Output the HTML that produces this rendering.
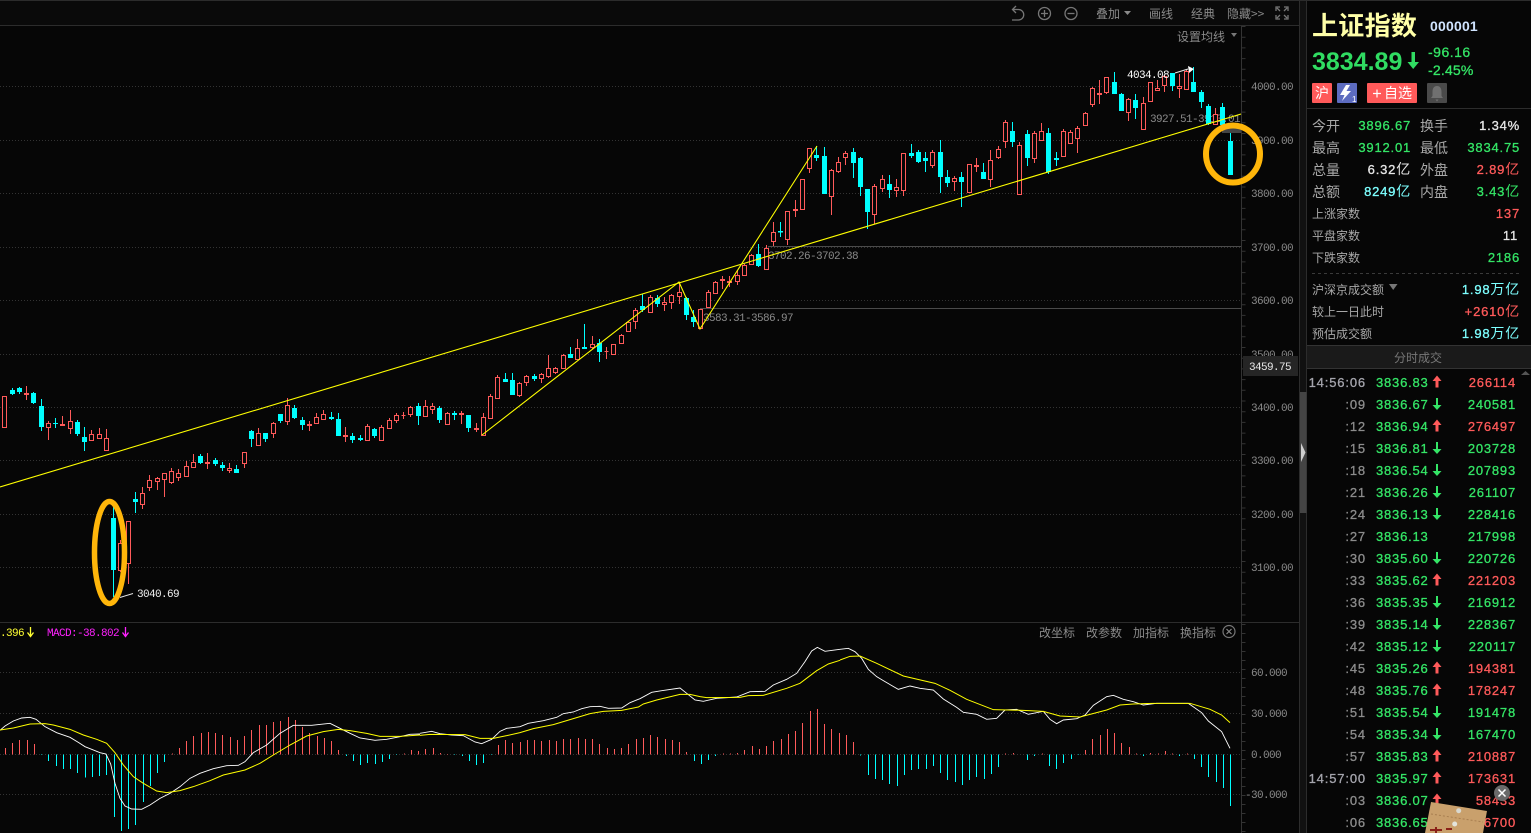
<!DOCTYPE html>
<html lang="zh"><head><meta charset="utf-8"><title>上证指数</title>
<style>
html,body{margin:0;padding:0;background:#060606;width:1531px;height:833px;overflow:hidden}
svg{display:block;position:absolute;left:0;top:0}
text{white-space:pre}
.m{font:11px "Liberation Mono",monospace;letter-spacing:-.6px;fill:#8a8a8a}
.c{font:12px "WenQuanYi Zen Hei","Noto Sans CJK SC",sans-serif;fill:#8a8a8a}
.l{font:14px "WenQuanYi Zen Hei","Noto Sans CJK SC",sans-serif;fill:#a8a8a8}
.s{font:12px "WenQuanYi Zen Hei","Noto Sans CJK SC",sans-serif;fill:#a8a8a8}
.n{font:13px "Liberation Sans",sans-serif;letter-spacing:.85px;stroke:#8c8c8c;stroke-width:.3px}
.v{font:13px "Liberation Sans","WenQuanYi Zen Hei",sans-serif;letter-spacing:.8px;stroke-width:.3px}
.g{fill:#34e566;stroke:#34e566}.r{fill:#ff5a5a;stroke:#ff5a5a}.w{fill:#e6e6e6;stroke:#e6e6e6}.y{fill:#7dffff;stroke:#7dffff}.t{fill:#8c8c8c}
.z{stroke-width:0;font-size:14px}
</style></head><body>
<svg width="1531" height="833" viewBox="0 0 1531 833" xmlns="http://www.w3.org/2000/svg">
<defs>
<path id="u" d="M0-6.5 4.5-1H1.5V5.500H-1.500V-1H-4.500Z" fill="#ff5a5a"/>
<path id="d" d="M-1-6H1V1H4.500L0 6-4.500 1H-1Z" fill="#34e566"/>
</defs>
<rect width="1531" height="833" fill="#060606"/>
<!-- toolbar -->
<rect x="0" y="0" width="1300" height="25" fill="#0a0a0a"/>
<path d="M0 .5H1531M0 25.500H1299M0 622.500H1299" stroke="#2c2c2c" fill="none"/>
<!-- grid -->
<path d="M0 86.500H1241M0 140.500H1241M0 193.500H1241M0 247.500H1241M0 300.500H1241M0 354.500H1241M0 407.500H1241M0 460.500H1241M0 514.500H1241M0 567.500H1241M0 672.500H1241M0 713.500H1241M0 754.500H1241M0 794.500H1241" stroke="#333" stroke-dasharray="1 2" fill="none"/>
<path d="M768 246.500H1241M700 308.500H1241" stroke="#4a4a4a" fill="none"/>
<path d="M1241.500 26V833" stroke="#333" fill="none"/>
<path d="M1243.500 26V620" stroke="#333" stroke-width="4" stroke-dasharray="1 9.700" fill="none"/>
<path d="M1243.500 624V833" stroke="#333" stroke-width="4" stroke-dasharray="1 8" fill="none"/>
<!-- axis labels -->
<g class="m">
<text x="1251" y="90">4000.00</text><text x="1251" y="144">3900.00</text><text x="1251" y="197">3800.00</text><text x="1251" y="251">3700.00</text><text x="1251" y="304">3600.00</text><text x="1251" y="358">3500.00</text><text x="1251" y="411">3400.00</text><text x="1251" y="464">3300.00</text><text x="1251" y="518">3200.00</text><text x="1251" y="571">3100.00</text>
<text x="1251" y="676">60.000</text><text x="1251" y="717">30.000</text><text x="1251" y="758">0.000</text><text x="1245" y="798">-30.000</text>
<text x="768" y="259">3702.26-3702.38</text><text x="703" y="321">3583.31-3586.97</text><text x="1150" y="122">3927.51-3913.01</text>
</g>
<rect x="1243" y="356" width="55" height="20" fill="#252525"/>
<text class="m" x="1249" y="370" style="fill:#e8e8e8">3459.75</text>
<!-- candles -->
<g shape-rendering="crispEdges" stroke-width="1">
<path fill="none" stroke="#ff5a5a" d="M4.500 396V428M26.500 386V400M48.500 421V440M62.500 416V426M70.500 410V434M91.500 430V441M99.500 428V438M106.500 429V451M120.500 540V572M128.500 521V584M142.500 487V509M149.500 475V491M157.500 477V490M164.500 473V497M171.500 468V484M178.500 469V481M186.500 461V477M193.500 454V468M207.500 453V469M229.500 463V473M244.500 452V468M258.500 428V446M273.500 422V438M287.500 398V425M309.500 421V431M316.500 413V424M323.500 410V419M345.500 427V442M367.500 424V441M381.500 425V440M389.500 418V428M396.500 413V423M403.500 412V419M410.500 406V417M425.500 400V416M432.500 403V414M447.500 412V425M461.500 411V424M476.500 423V432M483.500 413V436M490.500 394V419M497.500 375V399M519.500 382V397M526.500 375V386M541.500 373V383M548.500 355V378M555.500 367V374M563.500 354V369M577.500 339V359M592.500 336V349M606.500 347V359M613.500 344V355M621.500 334V344M628.500 321V332M635.500 308V329M650.500 295V313M664.500 297V311M671.500 294V309M679.500 282V304M700.500 309V329M708.500 290V308M715.500 281V294M722.500 276V289M729.500 276V287M737.500 270V285M744.500 264V275M751.500 254V265M766.500 245V269M773.500 222V246M787.500 211V245M795.500 200V217M802.500 179V209M809.500 148V173M831.500 169V215M838.500 157V173M845.500 151V165M874.500 184V224M882.500 175V192M896.500 179V197M903.500 153V196M932.500 150V168M954.500 176V191M969.500 164V192M976.500 158V172M990.500 150V187M998.500 146V159M1005.500 120V148M1019.500 142V194M1034.500 131V163M1041.500 123V141M1063.500 129V157M1070.500 130V144M1077.500 126V153M1085.500 112V126M1092.500 87V107M1099.500 80V104M1106.500 77V94M1128.500 98V121M1143.500 97V129M1150.500 82V101M1157.500 80V91M1164.500 75V92M1179.500 74V98M1186.500 70V90M1215.500 108V125"/>
<path fill="#060606" stroke="#ff5a5a" d="M2.500 396.500h4V427.500h-4zM24.500 393.500h4v1h-4zM46.500 423.500h4v4h-4zM60.500 424.500h4v1h-4zM68.500 421.500h4v7h-4zM89.500 434.500h4v6h-4zM97.500 434.500h4v4h-4zM104.500 438.500h4v12h-4zM118.500 543.500h4v27h-4zM126.500 521.500h4v42h-4zM140.500 493.500h4v11h-4zM147.500 480.500h4v7h-4zM155.500 478.500h4v3h-4zM162.500 473.500h4v6h-4zM169.500 471.500h4v11h-4zM176.500 473.500h4v4h-4zM184.500 466.500h4v10h-4zM191.500 462.500h4v5h-4zM205.500 462.500h4v1h-4zM227.500 468.500h4v2h-4zM242.500 452.500h4v11h-4zM256.500 433.500h4v12h-4zM271.500 423.500h4v10h-4zM285.500 405.500h4v16h-4zM307.500 424.500h4v1h-4zM314.500 417.500h4v6h-4zM321.500 414.500h4v5h-4zM343.500 435.500h4v1h-4zM365.500 426.500h4v14h-4zM379.500 427.500h4v13h-4zM387.500 420.500h4v8h-4zM394.500 415.500h4v5h-4zM401.500 415.500h4v0h-4zM408.500 407.500h4v7h-4zM423.500 406.500h4v10h-4zM430.500 406.500h4v3h-4zM445.500 413.500h4v11h-4zM459.500 413.500h4v1h-4zM474.500 428.500h4v1h-4zM481.500 417.500h4v18h-4zM488.500 396.500h4v22h-4zM495.500 377.500h4v21h-4zM517.500 383.500h4v12h-4zM524.500 376.500h4v6h-4zM539.500 374.500h4v4h-4zM546.500 368.500h4v8h-4zM553.500 368.500h4v4h-4zM561.500 355.500h4v13h-4zM575.500 348.500h4v11h-4zM590.500 344.500h4v3h-4zM604.500 351.500h4v0h-4zM611.500 344.500h4v10h-4zM619.500 335.500h4v8h-4zM626.500 322.500h4v9h-4zM633.500 310.500h4v11h-4zM648.500 297.500h4v15h-4zM662.500 302.500h4v2h-4zM669.500 295.500h4v7h-4zM677.500 292.500h4v4h-4zM698.500 309.500h4v19h-4zM706.500 292.500h4v15h-4zM713.500 282.500h4v11h-4zM720.500 279.500h4v1h-4zM727.500 281.500h4v1h-4zM735.500 275.500h4v6h-4zM742.500 265.500h4v10h-4zM749.500 255.500h4v9h-4zM764.500 248.500h4v21h-4zM771.500 232.500h4v9h-4zM785.500 211.500h4v28h-4zM793.500 209.500h4v1h-4zM800.500 179.500h4v30h-4zM807.500 148.500h4v20h-4zM829.500 170.500h4v26h-4zM836.500 162.500h4v9h-4zM843.500 153.500h4v4h-4zM872.500 186.500h4v28h-4zM880.500 179.500h4v9h-4zM894.500 187.500h4v3h-4zM901.500 153.500h4v37h-4zM930.500 152.500h4v13h-4zM952.500 178.500h4v3h-4zM967.500 164.500h4v28h-4zM974.500 165.500h4v1h-4zM988.500 160.500h4v19h-4zM996.500 149.500h4v8h-4zM1003.500 122.500h4v19h-4zM1017.500 145.500h4v49h-4zM1032.500 133.500h4v25h-4zM1039.500 131.500h4v9h-4zM1061.500 131.500h4v25h-4zM1068.500 132.500h4v11h-4zM1075.500 128.500h4v10h-4zM1083.500 113.500h4v12h-4zM1090.500 88.500h4v16h-4zM1097.500 93.500h4v1h-4zM1104.500 77.500h4v15h-4zM1126.500 99.500h4v13h-4zM1141.500 103.500h4v26h-4zM1148.500 82.500h4v19h-4zM1155.500 88.500h4v2h-4zM1162.500 76.500h4v9h-4zM1177.500 86.500h4v2h-4zM1184.500 71.500h4v18h-4zM1213.500 114.500h4v10h-4z"/>
<path fill="none" stroke="#00ffff" d="M12.500 388V395M19.500 387V394M33.500 392V404M41.500 399V431M55.500 418V428M77.500 420V436M84.500 427V451M113.500 507V597M135.500 492V513M200.500 454V464M215.500 458V466M222.500 462V471M236.500 465V473M251.500 430V447M265.500 433V442M280.500 414V423M294.500 405V419M302.500 417V430M331.500 412V420M338.500 413V436M352.500 433V443M360.500 435V441M374.500 428V438M418.500 403V425M439.500 406V423M454.500 411V420M468.500 415V432M505.500 373V382M512.500 373V395M534.500 374V381M570.500 347V358M584.500 324V349M599.500 339V362M642.500 294V312M657.500 295V307M686.500 297V320M693.500 310V327M758.500 244V267M780.500 222V237M816.500 146V161M824.500 147V194M853.500 148V178M860.500 157V196M867.500 189V229M889.500 175V198M911.500 144V158M918.500 150V163M925.500 152V172M940.500 140V193M947.500 170V187M961.500 172V207M983.500 163V179M1012.500 122V147M1027.500 130V166M1048.500 128V174M1056.500 152V166M1114.500 72V94M1121.500 93V111M1135.500 94V119M1172.500 73V91M1193.500 67V92M1201.500 90V108M1208.500 104V125M1222.500 103V127M1230.500 133V175"/>
<path fill="#00ffff" d="M10 390h5v4h-5zM17 388h5v4h-5zM31 393h5v10h-5zM39 406h5v21h-5zM53 423h5v1h-5zM75 422h5v12h-5zM82 437h5v5h-5zM111 518h5v52h-5zM133 499h5v3h-5zM198 456h5v7h-5zM213 460h5v4h-5zM220 465h5v3h-5zM234 469h5v4h-5zM249 431h5v8h-5zM263 433h5v6h-5zM278 414h5v7h-5zM292 408h5v10h-5zM300 420h5v5h-5zM329 417h5v2h-5zM336 419h5v17h-5zM350 436h5v4h-5zM358 438h5v2h-5zM372 429h5v7h-5zM416 406h5v10h-5zM437 408h5v12h-5zM452 413h5v2h-5zM466 415h5v13h-5zM503 379h5v3h-5zM510 380h5v15h-5zM532 376h5v3h-5zM568 354h5v4h-5zM582 347h5v2h-5zM597 343h5v9h-5zM640 306h5v4h-5zM655 298h5v6h-5zM684 298h5v17h-5zM691 317h5v5h-5zM756 254h5v12h-5zM778 231h5v1.500h-5zM814 155h5v3h-5zM822 156h5v38h-5zM851 152h5v11h-5zM858 158h5v29h-5zM865 189h5v23h-5zM887 184h5v6h-5zM909 153h5v3h-5zM916 152h5v10h-5zM923 158h5v3h-5zM938 152h5v25h-5zM945 177h5v6h-5zM959 177h5v5h-5zM981 172h5v7h-5zM1010 131h5v11h-5zM1025 134h5v24h-5zM1046 133h5v39h-5zM1054 158h5v2h-5zM1112 82h5v12h-5zM1119 94h5v17h-5zM1133 100h5v8h-5zM1170 73h5v13h-5zM1191 82h5v10h-5zM1199 92h5v10h-5zM1206 106h5v18h-5zM1220 107h5v18h-5zM1228 141h5v34h-5z"/>
</g>
<rect x="1222" y="128" width="19" height="5" fill="#444"/>
<!-- drawing lines -->
<g fill="none" stroke="#ffff00" stroke-width="1.100">
<path d="M0 487 1241 114"/>
<path d="M482 435 679 282 700 329 817 146"/>
</g>
<!-- annotations -->
<path d="M120 597.500 133 593.500M1175 73 1188 69" stroke="#e8e8e8" fill="none"/>
<path d="M1188 66 1194 69 1189 73Z" fill="#fff"/>
<text class="m" x="137" y="597" style="fill:#f0f0f0">3040.69</text>
<text class="m" x="1127" y="78" style="fill:#fff">4034.08</text>
<!-- orange circles -->
<ellipse cx="109.500" cy="552.500" rx="15" ry="51" fill="none" stroke="#ffb60a" stroke-width="5.500"/>
<ellipse cx="1233" cy="154" rx="27" ry="28.500" fill="none" stroke="#ffb60a" stroke-width="6"/>
<!-- toolbar content -->
<g fill="none" stroke="#777" stroke-width="1.300">
<path d="M1013 9.500H1018.500A5.200 5.200 0 0 1 1018.500 20H1012M1016 6 1012.500 9.500 1016 13"/>
<circle cx="1044.500" cy="13.500" r="6"/><path d="M1041 13.500H1048M1044.500 10V17"/>
<circle cx="1071" cy="13.500" r="6"/><path d="M1067.500 13.500H1074.500"/>
<path d="M1276 11V7H1280M1284 7H1288V11M1276 15V19H1280M1284 19H1288V15M1277 8 1280 11M1287 8 1284 11M1277 18 1280 15M1287 18 1284 15"/>
</g>
<g class="c">
<text x="1096" y="18">叠加</text><text x="1149" y="18">画线</text><text x="1191" y="18">经典</text><text x="1227" y="18">隐藏&gt;&gt;</text>
<text x="1177" y="41">设置均线</text>
<text x="1039" y="637">改坐标</text><text x="1086" y="637">改参数</text><text x="1133" y="637">加指标</text><text x="1180" y="637">换指标</text>
</g>
<path d="M1124 11H1131L1127.500 15Z" fill="#8a8a8a"/>
<path d="M1231 33H1237L1234 37Z" fill="#777"/>
<circle cx="1229" cy="631.500" r="6" fill="none" stroke="#777" stroke-width="1.200"/>
<path d="M1226.500 629 1231.500 634M1231.500 629 1226.500 634" stroke="#888" stroke-width="1.200"/>
<!-- MACD header -->
<text x="0" y="636" style="font:11px 'Liberation Mono',monospace;letter-spacing:-.6px;fill:#ffff33">.396</text>
<path d="M30.500 627V636M27.500 632.500 30.500 636.500 33.500 632.500" stroke="#ffff33" stroke-width="1.300" fill="none"/>
<text x="47" y="636" style="font:11px 'Liberation Mono',monospace;letter-spacing:-.6px;fill:#ff22ff">MACD:-38.802</text>
<path d="M125.500 627V636M122.500 632.500 125.500 636.500 128.500 632.500" stroke="#ff22ff" stroke-width="1.300" fill="none"/>
<!-- MACD part 1 -->
<g transform="translate(0 620) scale(.33333)" fill="none" stroke-width="3">
<g shape-rendering="crispEdges">
<path stroke="#ff5a5a" d="M16 403V384M37 403V369M58 403V360M82 403V360M103 403V372M517 403V400M538 403V384M559 403V363M580 403V348M604 403V339M625 403V336M646 403V339M667 403V345M691 403V351M712 403V360M733 403V348M754 403V330M778 403V315M799 403V315M820 403V306M841 403V303M865 403V291M886 403V300M907 403V321M928 403V339M952 403V348M973 403V354M994 403V363M1015 403V390M1213 403V401M1234 403V390M1255 403V393"/>
<path stroke="#00ffff" d="M124 403V405M145 403V423M169 403V438M190 403V447M211 403V447M232 403V459M256 403V473M277 403V471M298 403V468M319 403V465M343 403V591M364 403V633M385 403V627M406 403V615M430 403V546M451 403V498M472 403V459M493 403V426M1039 403V408M1060 403V423M1081 403V435M1102 403V429M1126 403V432M1147 403V426M1168 403V417M1189 403V405"/>
</g>
<polyline stroke="#ffffff" stroke-width="2.700" points="0,331 15,318 40,303 65,294 90,292 108,298 135,320 170,338 210,352 235,367 255,380 275,388 300,398 318,402 332,432 345,490 360,535 375,558 395,567 425,568 450,555 480,535 510,520 540,500 570,475 600,460 640,446 680,437 715,436 735,425 760,398 800,375 840,340 880,316 935,316 990,310 1020,325 1050,340 1080,354 1125,361 1160,358 1200,350 1230,343 1260,342"/>
<polyline stroke="#ffff00" stroke-width="3" points="0,330 40,324 90,312 135,311 160,315 210,328 250,345 290,358 320,370 345,398 370,435 400,470 430,490 470,513 500,518 540,512 580,500 630,482 670,465 735,450 780,430 820,405 870,375 920,348 970,335 1015,328 1050,332 1100,340 1140,349 1200,349 1260,345"/>
</g>
<!-- MACD part 2 -->
<g transform="translate(420 620) scale(.33333)" fill="none" stroke-width="3">
<g shape-rendering="crispEdges">
<path stroke="#ff5a5a" d="M16 403V387M40 403V384M61 403V399M82 403V402M235 403V375M256 403V360M277 403V369M301 403V366M322 403V360M343 403V360M364 403V363M388 403V360M409 403V363M430 403V357M451 403V357M475 403V354M496 403V357M517 403V357M538 403V372M562 403V384M583 403V387M604 403V384M625 403V372M649 403V357M670 403V354M691 403V345M712 403V351M736 403V357M757 403V360M778 403V366M799 403V396M910 403V401M931 403V401M952 403V399M973 403V390M997 403V378M1018 403V387M1039 403V378M1060 403V363M1084 403V357M1105 403V342M1126 403V333M1147 403V309M1171 403V273M1192 403V267M1213 403V312M1234 403V327M1258 403V339"/>
<path stroke="#00ffff" d="M103 403V405M127 403V408M148 403V423M169 403V435M190 403V429M214 403V405M823 403V423M844 403V432M865 403V420M886 403V408"/>
</g>
<polyline stroke="#ffffff" stroke-width="2.700" points="0,340 35,334 60,341 95,345 130,347 165,366 185,371 215,358 240,334 260,325 300,320 325,310 370,302 410,292 430,281 460,276 485,266 510,260 540,259 565,265 605,264 630,248 660,236 695,217 725,212 780,204 800,220 825,240 850,244 890,235 950,231 990,215 1035,214 1060,195 1100,178 1130,160 1155,125 1175,93 1192,82 1215,94 1260,88"/>
<polyline stroke="#ffff00" stroke-width="3" points="0,346 30,343 135,344 180,355 220,355 260,347 300,338 340,326 400,314 460,296 510,281 550,274 605,271 655,261 670,252 710,240 780,223 810,223 840,230 860,233 960,232 985,227 1030,226 1100,205 1140,190 1190,152 1225,132 1260,121"/>
</g>
<!-- MACD part 3 -->
<g transform="translate(840 620) scale(.33333)" fill="none" stroke-width="3">
<g shape-rendering="crispEdges">
<path stroke="#ff5a5a" d="M19 403V345M40 403V366M496 403V401M520 403V399M607 403V401M736 403V390M757 403V357M781 403V345M802 403V327M823 403V339M844 403V369M868 403V381M889 403V401M931 403V399M955 403V401M976 403V393M997 403V401M1042 403V401"/>
<path stroke="#00ffff" d="M61 403V407M85 403V465M106 403V477M127 403V480M148 403V492M172 403V498M193 403V465M214 403V450M235 403V447M259 403V447M280 403V438M301 403V459M322 403V480M346 403V486M367 403V495M388 403V480M409 403V471M433 403V477M454 403V462M475 403V441M562 403V420M583 403V408M628 403V438M649 403V447M670 403V429M694 403V417M715 403V405M910 403V408M1018 403V408M1063 403V417M1084 403V441M1105 403V471M1129 403V486M1150 403V504M1171 403V558"/>
</g>
<polyline stroke="#ffffff" stroke-width="2.700" points="0,88 25,85 45,95 65,115 85,148 110,170 135,185 175,208 210,198 240,205 280,210 310,237 350,262 370,277 410,283 440,298 470,295 495,270 530,268 565,283 610,274 630,298 650,311 670,300 710,296 735,285 760,256 800,230 820,226 850,238 880,245 910,255 950,250 1000,250 1045,250 1085,278 1105,303 1145,335 1170,385"/>
<polyline stroke="#ffff00" stroke-width="3" points="0,120 30,109 60,108 110,130 190,168 285,190 330,211 380,238 460,269 550,271 610,274 660,288 720,291 800,270 840,255 880,252 940,250 1050,250 1110,268 1145,285 1170,308"/>
</g>
<!-- splitter -->
<rect x="1299" y="1" width="8" height="832" fill="#111"/>
<path d="M1299.500 0V833M1306.500 0V833" stroke="#2c2c2c"/>
<rect x="1300" y="392" width="6.500" height="121" fill="#444"/>
<path d="M1301 443 1305.500 452.500 1301 462Z" fill="#cfcfcf"/>
<!-- right panel -->
<rect x="1307" y="1" width="224" height="832" fill="#060606"/>
<text x="1312" y="35" style="font:bold 26px 'Noto Sans CJK SC','WenQuanYi Zen Hei',sans-serif;fill:#ffffa8;letter-spacing:.3px">上证指数</text>
<text x="1430" y="31" style="font:bold 14px 'Liberation Sans',sans-serif;fill:#d0e4ff;letter-spacing:.2px">000001</text>
<text x="1312" y="70" style="font:bold 25px 'Liberation Sans',sans-serif;fill:#30dc62">3834.89</text>
<path d="M1411.500 52H1415V62H1419L1413.200 69 1407.500 62H1411.500Z" fill="#30dc62"/>
<text x="1428" y="57" class="v g" style="font-size:14px;letter-spacing:.5px">-96.16</text>
<text x="1428" y="75" class="v g" style="font-size:14px;letter-spacing:.2px">-2.45%</text>
<!-- buttons -->
<rect x="1312" y="83" width="20" height="20" rx="1" fill="#ff5a5a"/>
<text x="1315" y="98" style="font:14px 'Noto Sans CJK SC',sans-serif;fill:#fff">沪</text>
<rect x="1337" y="83" width="20" height="20" rx="1" fill="#5d6cc0"/>
<path d="M1346 85 1340 95H1344.500L1342 101 1351 91H1346.500L1350 85Z" fill="#fff"/>
<text x="1352" y="102" style="font:8px 'Liberation Sans',sans-serif;fill:#fff">1</text>
<rect x="1367" y="83" width="50" height="20" rx="1" fill="#ff5a5a"/>
<path d="M1373 93.500H1381M1377 89.500V97.500" stroke="#fff" stroke-width="1.200"/>
<text x="1384" y="98" style="font:14px 'Noto Sans CJK SC',sans-serif;fill:#fff">自选</text>
<rect x="1427" y="83" width="20" height="20" rx="1" fill="#4a4a4a"/>
<path d="M1437 86C1433.500 86 1432.500 89 1432.500 92V96L1431 98H1443L1441.500 96V92C1441.500 89 1440.500 86 1437 86ZM1435.500 99.500H1438.500L1437 101.500Z" fill="#707070"/>
<path d="M1307 108.500H1531" stroke="#2c2c2c"/>
<!-- quote rows -->
<g class="l">
<text x="1312" y="131">今开</text><text x="1420" y="131">换手</text>
<text x="1312" y="153">最高</text><text x="1420" y="153">最低</text>
<text x="1312" y="175">总量</text><text x="1420" y="175">外盘</text>
<text x="1312" y="197">总额</text><text x="1420" y="197">内盘</text>
</g>
<g class="v" text-anchor="end">
<text x="1411" y="130" class="g">3896.67</text><text x="1520" y="130" class="w">1.34%</text>
<text x="1411" y="152" class="g">3912.01</text><text x="1520" y="152" class="g">3834.75</text>
<text x="1411" y="174" class="w">6.32<tspan class="z">亿</tspan></text><text x="1520" y="174" class="r">2.89<tspan class="z">亿</tspan></text>
<text x="1411" y="196" class="y">8249<tspan class="z">亿</tspan></text><text x="1520" y="196" class="g">3.43<tspan class="z">亿</tspan></text>
<text x="1520" y="218" class="r">137</text>
<text x="1518" y="240" class="w">11</text>
<text x="1520" y="262" class="g">2186</text>
<text x="1520" y="294" class="y">1.98<tspan class="z">万亿</tspan></text>
<text x="1520" y="316" class="r">+2610<tspan class="z">亿</tspan></text>
<text x="1520" y="338" class="y">1.98<tspan class="z">万亿</tspan></text>
</g>
<g class="s">
<text x="1312" y="218">上涨家数</text><text x="1312" y="240">平盘家数</text><text x="1312" y="262">下跌家数</text>
<text x="1312" y="294">沪深京成交额</text><text x="1312" y="316">较上一日此时</text><text x="1312" y="338">预估成交额</text>
</g>
<path d="M1312 273.500H1520" stroke="#3a3a3a" stroke-dasharray="3 3"/>
<path d="M1389 284H1397.500L1393.200 290Z" fill="#777"/>
<rect x="1307" y="345" width="224" height="24" fill="#1a1a1a"/>
<path d="M1307 345.500H1531M1307 368.500H1531" stroke="#333"/>
<text x="1394" y="362" class="c" style="fill:#777">分时成交</text>
<path d="M1521 375H1530L1525.500 371Z" fill="#555"/>
<!-- trades -->
<g class="n" text-anchor="end" style="fill:#8c8c8c">
<text x="1366" y="387" style="fill:#a5a5ad;stroke:#a5a5ad">14:56:06</text><text x="1366" y="409">:09</text><text x="1366" y="431">:12</text><text x="1366" y="453">:15</text><text x="1366" y="475">:18</text><text x="1366" y="497">:21</text><text x="1366" y="519">:24</text><text x="1366" y="541">:27</text><text x="1366" y="563">:30</text><text x="1366" y="585">:33</text><text x="1366" y="607">:36</text><text x="1366" y="629">:39</text><text x="1366" y="651">:42</text><text x="1366" y="673">:45</text><text x="1366" y="695">:48</text><text x="1366" y="717">:51</text><text x="1366" y="739">:54</text><text x="1366" y="761">:57</text><text x="1366" y="783" style="fill:#a5a5ad;stroke:#a5a5ad">14:57:00</text><text x="1366" y="805">:03</text><text x="1366" y="827">:06</text>
</g>
<g class="v g">
<text x="1376" y="387">3836.83</text><text x="1376" y="409">3836.67</text><text x="1376" y="431">3836.94</text><text x="1376" y="453">3836.81</text><text x="1376" y="475">3836.54</text><text x="1376" y="497">3836.26</text><text x="1376" y="519">3836.13</text><text x="1376" y="541">3836.13</text><text x="1376" y="563">3835.60</text><text x="1376" y="585">3835.62</text><text x="1376" y="607">3835.35</text><text x="1376" y="629">3835.14</text><text x="1376" y="651">3835.12</text><text x="1376" y="673">3835.26</text><text x="1376" y="695">3835.76</text><text x="1376" y="717">3835.54</text><text x="1376" y="739">3835.34</text><text x="1376" y="761">3835.83</text><text x="1376" y="783">3835.97</text><text x="1376" y="805">3836.07</text><text x="1376" y="827">3836.65</text>
</g>
<use href="#u" x="1437" y="382"/><use href="#d" x="1437" y="404"/><use href="#u" x="1437" y="426"/><use href="#d" x="1437" y="448"/><use href="#d" x="1437" y="470"/><use href="#d" x="1437" y="492"/><use href="#d" x="1437" y="514"/><use href="#d" x="1437" y="558"/><use href="#u" x="1437" y="580"/><use href="#d" x="1437" y="602"/><use href="#d" x="1437" y="624"/><use href="#d" x="1437" y="646"/><use href="#u" x="1437" y="668"/><use href="#u" x="1437" y="690"/><use href="#d" x="1437" y="712"/><use href="#d" x="1437" y="734"/><use href="#u" x="1437" y="756"/><use href="#u" x="1437" y="778"/><use href="#u" x="1437" y="800"/>
<g class="v" text-anchor="end">
<text x="1516" y="387" class="r">266114</text><text x="1516" y="409" class="g">240581</text><text x="1516" y="431" class="r">276497</text><text x="1516" y="453" class="g">203728</text><text x="1516" y="475" class="g">207893</text><text x="1516" y="497" class="g">261107</text><text x="1516" y="519" class="g">228416</text><text x="1516" y="541" class="g">217998</text><text x="1516" y="563" class="g">220726</text><text x="1516" y="585" class="r">221203</text><text x="1516" y="607" class="g">216912</text><text x="1516" y="629" class="g">228367</text><text x="1516" y="651" class="g">220117</text><text x="1516" y="673" class="r">194381</text><text x="1516" y="695" class="r">178247</text><text x="1516" y="717" class="g">191478</text><text x="1516" y="739" class="g">167470</text><text x="1516" y="761" class="r">210887</text><text x="1516" y="783" class="r">173631</text><text x="1516" y="805" class="r">58433</text><text x="1516" y="827" class="r">56700</text>
</g>
<!-- floating card -->
<path d="M1431 802 1487 811 1483 833H1425Z" fill="#c9a06c"/>
<path d="M1431 814 1483 822" stroke="#a87e50" stroke-dasharray="2 2"/>
<circle cx="1458.700" cy="810.700" r="2.500" fill="#d8d8d0"/>
<circle cx="1454.700" cy="824" r="2.500" fill="#e4e4dc"/>
<path d="M1430 830H1442M1436 827V833M1446 829H1452" stroke="#8a2018" stroke-width="2"/>
<circle cx="1502" cy="793" r="8" fill="#6a6a6a"/>
<path d="M1498.500 789.500 1505.500 796.500M1505.500 789.500 1498.500 796.500" stroke="#fff" stroke-width="1.500"/>
</svg>
</body></html>
